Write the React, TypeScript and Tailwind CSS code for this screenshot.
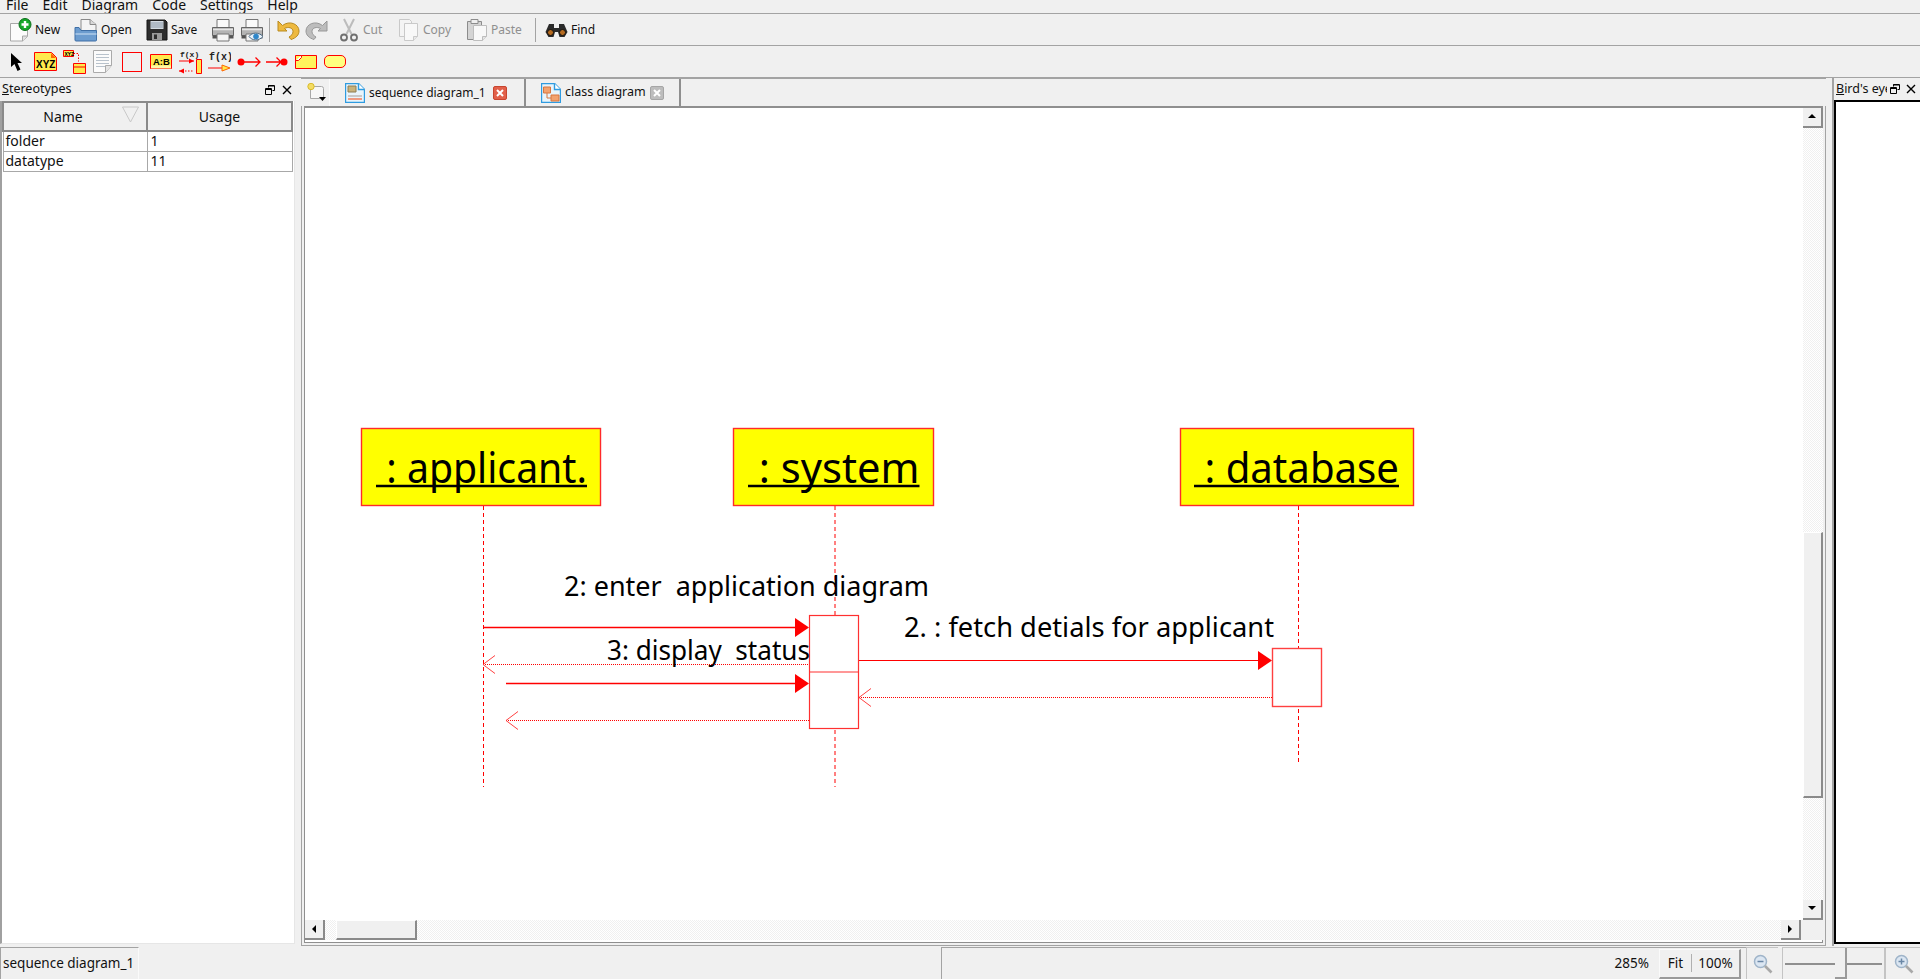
import React from 'react';

const UI_FONT = "font-['Noto_Sans',sans-serif]";

function IconNew() {
  return (
    <svg width="24" height="24" viewBox="0 0 24 24">
      <path d="M2.500 5.500h12l5 4v9l-5 4.500h-12z" fill="#fbfbfb" stroke="#a8a8a8" />
      <path d="M14.500 23v-5h5" fill="#e2e2e2" stroke="#a8a8a8" />
      <circle cx="17" cy="6.500" r="6" fill="#18a82c" stroke="#0b6e1a" />
      <path d="M17 3v7M13.500 6.500h7" stroke="#fff" strokeWidth="2.400" />
    </svg>
  );
}

function IconOpen() {
  return (
    <svg width="24" height="24" viewBox="0 0 24 24">
      <path d="M7 1.500h9l6 5v9H7z" fill="#f4f4f4" stroke="#8a8a8a" />
      <path d="M16 1.500v5h6" fill="#d9d9d9" stroke="#8a8a8a" />
      <path d="M1 9.500h4l2 3h15.500V22a1 1 0 0 1-1 1H2a1 1 0 0 1-1-1z" fill="#6c9ccf" stroke="#3f6fa6" />
      <path d="M1.500 15h21v2h-21z" fill="#9dbfe2" />
    </svg>
  );
}

function IconSave() {
  return (
    <svg width="22" height="22" viewBox="0 0 22 22">
      <path d="M1 1h18l2 2v18H1z" fill="#2d2d2d" stroke="#151515" />
      <path d="M4.500 2h13v8h-13z" fill="#d5dce3" />
      <path d="M5 4h12M5 6h12M5 8h12" stroke="#8b99a8" />
      <path d="M6 14h10v7H6z" fill="#9a9a9a" />
      <path d="M8 15.500h3v4.500H8z" fill="#2d2d2d" />
    </svg>
  );
}

function IconPrint({ eye }: { eye?: boolean }) {
  return (
    <svg width="24" height="24" viewBox="0 0 24 24">
      <path d="M6 1.500h12v8H6z" fill="#fafafa" stroke="#777" />
      <path d="M1.500 9.500h21v8h-21z" fill="#b4b4b4" stroke="#666" />
      <path d="M2 11.500h20" stroke="#e6e6e6" strokeWidth="1.500" />
      <path d="M1.500 17.500h21v3h-21z" fill="#555" />
      <path d="M6 16h12v7H6z" fill="#f5f5f5" stroke="#777" />
      {eye && (
        <g>
          <path d="M9 18.500c3-4.500 10-4.500 14 0-4 4.500-11 4.500-14 0z" fill="#e8f2fa" stroke="#4b6a85" />
          <circle cx="16" cy="18.500" r="2.800" fill="#2e86c9" />
        </g>
      )}
    </svg>
  );
}

function IconUndo({ on, flip }: { on?: boolean; flip?: boolean }) {
  const main = on ? '#eeb93f' : '#bdbdbd';
  const edge = on ? '#b98a1e' : '#979797';
  return (
    <svg width="24" height="22" viewBox="0 0 24 22" className={flip ? '-scale-x-100' : ''}>
      <path d="M2 2v10h9L8.500 9.500C12 7.500 17 8.500 17 12.500c0 2.500-1.500 4-4 5.500l2 2.500c5-1.500 8-4.500 8-8.500C23 5 13.500 1 6.500 6.500L2 2z" fill={main} stroke={edge} strokeLinejoin="round" />
    </svg>
  );
}

function IconCut() {
  return (
    <svg width="22" height="24" viewBox="0 0 22 24" fill="none">
      <path d="M6 1l7.500 15M16 1L8.500 16" stroke="#bcbcbc" strokeWidth="2" />
      <circle cx="6" cy="19.500" r="3" stroke="#6f6f6f" strokeWidth="1.800" />
      <circle cx="16" cy="19.500" r="3" stroke="#6f6f6f" strokeWidth="1.800" />
    </svg>
  );
}

function IconCopy() {
  return (
    <svg width="22" height="24" viewBox="0 0 22 24">
      <path d="M1.500 1.500h10l2 2v15h-12z" fill="#f4f4f4" stroke="#c9c9c9" />
      <path d="M6.500 5.500h13v13l-4 4h-9z" fill="#f8f8f8" stroke="#c9c9c9" />
      <path d="M15.500 22.500v-4h4" fill="#e8e8e8" stroke="#c9c9c9" />
    </svg>
  );
}

function IconPaste() {
  return (
    <svg width="22" height="24" viewBox="0 0 22 24">
      <path d="M1.500 3.500h14v18h-14z" fill="#d4d4d4" stroke="#8c8c8c" />
      <path d="M5 1.500h7v4H5z" fill="#efefef" stroke="#8c8c8c" />
      <path d="M7.500 7.500h13v11l-4 4h-9z" fill="#f8f8f8" stroke="#bdbdbd" />
      <path d="M16.500 22.500v-4h4" fill="#e4e4e4" stroke="#bdbdbd" />
    </svg>
  );
}

function IconFind() {
  return (
    <svg width="23" height="16" viewBox="0 0 23 16">
      <path d="M4 2h5v4h5V2h5l3.500 8-3 5h-5L13 10h-3l-1.500 5h-5l-3-5z" fill="#2a2a2a" />
      <circle cx="5.500" cy="10.500" r="3" fill="#b56a1f" stroke="#111" />
      <circle cx="17.500" cy="10.500" r="3" fill="#b56a1f" stroke="#111" />
    </svg>
  );
}

function ToolText({ label, off }: { label: string; off?: boolean }) {
  return <span className={`text-[12px] leading-none ml-[3px] ${off ? 'text-[#8f8f8f]' : 'text-[#111]'}`}>{label}</span>;
}

function Sequence() {
  return (
    <svg width="24" height="24" viewBox="0 0 24 24" fill="none">
      <path d="M.5.500h10v6h-10z" fill="#ffe94d" stroke="#f00" />
      <path d="M10.500 3.500h5v8" stroke="#f00" strokeDasharray="1.500 1.500" />
      <path d="M10.500 13.500h12v10h-12z" fill="#ffe94d" stroke="#f00" />
      <path d="M11 17h11" stroke="#f00" />
      <text x="1.500" y="6" fontSize="5" fontWeight="700" fill="#000">XYZ</text>
    </svg>
  );
}

function Toolbar2() {
  return (
    <div className="h-[32px] flex items-center pl-[10px] border-b border-[#a3a3a3]">
      <div className="w-[24px] flex">
        <svg width="13" height="20" viewBox="0 0 13 20"><path d="M1 1v14l3.500-3 3 7 3-1.500-3-6.500H12z" fill="#000" /></svg>
      </div>
      <div className="w-[29px] flex">
        <svg width="23" height="19" viewBox="0 0 23 19">
          <path d="M.5.500h17l5 5v13H.5z" fill="#ffe94d" stroke="#f00" />
          <path d="M17 1l5 5h-5z" fill="#f60" />
          <text x="2" y="15.500" fontSize="10" fontWeight="700" fontFamily="Liberation Sans" fill="#000">XYZ</text>
        </svg>
      </div>
      <div className="w-[30px] flex"><Sequence /></div>
      <div className="w-[29px] flex">
        <svg width="20" height="24" viewBox="0 0 20 24">
          <path d="M.5.500h18v15l-6 7H.500z" fill="#fbfbfb" stroke="#aaa" />
          <path d="M3 4.500h13M3 7.500h13M3 10.500h13M3 13.500h13M3 16.500h9" stroke="#b8c2cc" />
          <path d="M12.500 22.500v-7h6" fill="#e4e4e4" stroke="#aaa" />
        </svg>
      </div>
      <div className="w-[28px] flex"><div className="w-[20px] h-[20px] border border-[#f00]" /></div>
      <div className="w-[29px] flex">
        <svg width="22" height="15" viewBox="0 0 22 15">
          <path d="M.5.500h21v14H.5z" fill="#ffe94d" stroke="#f00" />
          <path d="M1 11.500h20v3H1z" fill="#fff7a8" />
          <text x="3" y="11" fontSize="9.500" fontWeight="700" fontFamily="Liberation Sans" fill="#000">A:B</text>
        </svg>
      </div>
      <div className="w-[29px] flex">
        <svg width="23" height="24" viewBox="0 0 23 24">
          <text x="1" y="7" fontSize="8" fontWeight="700" fontFamily="Liberation Mono" fill="#222">f(x)</text>
          <path d="M0 11h15" stroke="#f00" />
          <path d="M10 8.500l5 2.500-5 2.500z" fill="#f00" />
          <path d="M0 21h15" stroke="#f00" strokeDasharray="1.500 1.500" />
          <path d="M5 18.500l-5 2.500 5 2.500z" fill="#f00" />
          <path d="M17.500 9.500h5v14h-5z" fill="#ffe94d" stroke="#f00" />
        </svg>
      </div>
      <div className="w-[29px] flex">
        <svg width="23" height="24" viewBox="0 0 23 24">
          <text x="1" y="10" fontSize="10" fontWeight="700" fontFamily="Liberation Mono" fill="#222">f(x)</text>
          <path d="M0 18h15" stroke="#f00" />
          <path d="M14 15l8 3-8 3z" fill="#ffe94d" stroke="#f60" />
        </svg>
      </div>
      <div className="w-[29px] flex">
        <svg width="24" height="12" viewBox="0 0 24 12">
          <circle cx="4" cy="6" r="3.500" fill="#f00" />
          <path d="M5 6h18M18.500 1.500L23 6l-4.500 4.500" fill="none" stroke="#f00" strokeWidth="1.300" />
        </svg>
      </div>
      <div className="w-[29px] flex">
        <svg width="22" height="12" viewBox="0 0 22 12">
          <circle cx="18" cy="6" r="3.500" fill="#f00" />
          <path d="M0 6h17M10.500 1.500L15 6l-4.500 4.500" fill="none" stroke="#f00" strokeWidth="1.300" />
        </svg>
      </div>
      <div className="w-[29px] flex">
        <svg width="22" height="14" viewBox="0 0 22 14">
          <path d="M.5.500h21v13H.5z" fill="#fff35c" stroke="#f00" />
          <path d="M6.500.500v2l-3 3h-3" fill="#fff" stroke="#f00" />
        </svg>
      </div>
      <div className="w-[22px] h-[13px] rounded-[5px] border border-[#f00] bg-[#ffff80]" />
    </div>
  );
}

function Toolbar1() {
  return (
    <div className="h-[32px] flex items-center pl-[8px] pt-[1px] border-b border-[#a3a3a3]">
      <div className="w-[66px] flex items-center"><IconNew /><ToolText label="New" /></div>
      <div className="w-[72px] flex items-center"><IconOpen /><ToolText label="Open" /></div>
      <div className="w-[65px] flex items-center"><IconSave /><ToolText label="Save" /></div>
      <div className="w-[29px] flex"><IconPrint /></div>
      <div className="w-[29px] flex"><IconPrint eye /></div>
      <div className="w-[7px] h-[24px] border-l border-[#a3a3a3]" />
      <div className="w-[29px] flex"><IconUndo on /></div>
      <div className="w-[33px] flex"><IconUndo flip /></div>
      <div className="w-[60px] flex items-center"><IconCut /><ToolText label="Cut" off /></div>
      <div className="w-[68px] flex items-center"><IconCopy /><ToolText label="Copy" off /></div>
      <div className="w-[69px] flex items-center"><IconPaste /><ToolText label="Paste" off /></div>
      <div className="w-[10px] h-[24px] border-l border-[#a3a3a3]" />
      <div className="flex items-center"><IconFind /><ToolText label="Find" /></div>
    </div>
  );
}

function DockButtons() {
  return (
    <>
      <svg width="10" height="10" viewBox="0 0 10 10" fill="none" stroke="#000">
        <path d="M3.500 2.500V.5h6v5H7.500" />
        <path d="M3 1h6" />
        <path d="M.5 3.500h6v6h-6z" />
        <path d="M0 4.500h7" />
      </svg>
      <svg width="10" height="10" viewBox="0 0 10 10" fill="none" stroke="#000" strokeWidth="1.400">
        <path d="M1 1l8 8M9 1L1 9" />
      </svg>
    </>
  );
}

function LeftPanel() {
  return (
    <div className="w-[295px] shrink-0 flex flex-col">
      <div className="h-[23px] flex items-center pl-[2px]">
        <span className="text-[12.500px] text-[#111]"><span className="underline">S</span>tereotypes</span>
        <div className="ml-auto flex items-center gap-[7px] mr-[3px]"><DockButtons /></div>
      </div>
      <div className="flex-1 bg-white border-l-2 border-[#a0a0a0] border-r border-r-[#e6e6e6] border-b border-b-[#e6e6e6] mb-[2px]">
        <table className="w-[291px] table-fixed border-collapse text-[14px] leading-[16px] text-[#111]">
          <thead>
            <tr className="h-[29px] bg-[#f0f0f0]">
              <th className="w-[144px] font-normal relative border-2 border-[#8a8a8a] pr-[24px]">
                Name
                <svg className="absolute right-[7px] top-[3px]" width="17" height="17" viewBox="0 0 17 17" fill="none">
                  <path d="M.5 1h16L8.500 16z" stroke="#c8c8c8" />
                </svg>
              </th>
              <th className="font-normal border-2 border-[#8a8a8a]">Usage</th>
            </tr>
          </thead>
          <tbody>
            <tr className="h-[20px]">
              <td className="px-[2px] py-0 border border-[#a8a8a8]">folder</td>
              <td className="px-[3px] py-0 border border-[#a8a8a8]">1</td>
            </tr>
            <tr className="h-[20px]">
              <td className="px-[2px] py-0 border border-[#a8a8a8]">datatype</td>
              <td className="px-[3px] py-0 border border-[#a8a8a8]">11</td>
            </tr>
          </tbody>
        </table>
      </div>
    </div>
  );
}

function CloseBadge({ on }: { on?: boolean }) {
  return (
    <div className={`w-[14px] h-[14px] rounded-[2px] flex items-center justify-center border ${on ? 'bg-[#e2604a] border-[#c8452f]' : 'bg-[#bdbdbd] border-[#a6a6a6]'}`}>
      <svg width="8" height="8" viewBox="0 0 8 8"><path d="M1 1l6 6M7 1L1 7" stroke="#fff" strokeWidth="2" /></svg>
    </div>
  );
}

function TabIcon({ kind }: { kind: 'seq' | 'class' }) {
  return (
    <svg width="20" height="20" viewBox="0 0 20 20">
      <path d="M.5.500h13l6 6v13H.5z" fill="#e9f4fb" stroke="#2f9be0" strokeWidth="1.400" />
      <path d="M13.500.500v6h6" fill="#fff" stroke="#2f9be0" strokeWidth="1.400" />
      {kind === 'seq' ? (
        <g>
          <path d="M3 3h8v6H3z" fill="#c9b27a" stroke="#8d7c52" />
          <path d="M3 12h14v2H3z" fill="#c8c8c8" />
          <path d="M3 16h14" stroke="#ef7d5a" strokeWidth="1.500" />
        </g>
      ) : (
        <g>
          <path d="M2.500 4h7v6h-7z" fill="#f3a26f" stroke="#d8763f" />
          <path d="M10 12h8v6h-8z" fill="#f3a26f" stroke="#d8763f" />
          <path d="M6 10v5h4" fill="none" stroke="#d8763f" />
        </g>
      )}
    </svg>
  );
}

function TabBar() {
  return (
    <div className="h-[28px] flex items-end border-t border-[#a3a3a3] text-[12px] text-[#111]">
      <div className="w-[28px] h-full flex items-center pl-[6px]">
        <svg width="20" height="19" viewBox="0 0 20 19">
          <path d="M3.500 3.500h11a2 2 0 0 1 2 2v10h-13z" fill="#f7f7f7" stroke="#a8a8a8" />
          <circle cx="4" cy="3.500" r="3.200" fill="#f4dc63" stroke="#d8bb2d" />
          <path d="M12 14h7l-3.500 4z" fill="#000" />
        </svg>
      </div>
      <div className="w-[197px] h-full flex items-center pl-[15px] border-r-2 border-[#8f8f8f] border-l border-l-[#fafafa]">
        <TabIcon kind="seq" />
        <span className="ml-[4px] w-[124px] whitespace-nowrap">sequence diagram_1</span>
        <CloseBadge on />
      </div>
      <div className="w-[155px] h-full flex items-center pl-[15px] border-r-2 border-[#8f8f8f]">
        <TabIcon kind="class" />
        <span className="ml-[4px] w-[85px] whitespace-nowrap text-[12.500px]">class diagram</span>
        <CloseBadge />
      </div>
    </div>
  );
}

function ArrowButton({ dir }: { dir: 'up' | 'down' | 'left' | 'right' }) {
  const paths = {
    up: 'M1 6h8L5 2z',
    down: 'M1 2h8L5 6z',
    left: 'M7 1v8L3 5z',
    right: 'M3 1v8l4-4z',
  };
  return (
    <div className="w-[20px] h-[20px] shrink-0 bg-[#f0f0f0] border-r-2 border-b-2 border-[#8a8a8a] flex items-center justify-center">
      <svg width="10" height="10" viewBox="0 0 10 10"><path d={paths[dir]} fill="#000" /></svg>
    </div>
  );
}

function Diagram() {
  const boxes = [
    { x: 56, w: 240, label: '\u00a0: applicant.', tx: 71, tw: 211 },
    { x: 428, w: 201, label: '\u00a0: system', tx: 443, tw: 171.5 },
    { x: 875, w: 234, label: '\u00a0: database', tx: 889, tw: 205 },
  ];
  const red = '#ff0000';
  return (
    <svg width="1498" height="812" viewBox="0 0 1498 812" className="block font-['Noto_Sans',sans-serif]">
      {/* lifelines */}
      <g stroke={red} strokeDasharray="4 3" fill="none">
        <path d="M178.500 398V679" />
        <path d="M530 398V679" />
        <path d="M993.500 398V655" />
      </g>

      {boxes.map(b => (
        <g key={b.label}>
          <rect x={b.x + 0.5} y={320.5} width={b.w - 1} height={77} fill="#ffff00" stroke="#ff2a2a" strokeWidth="1.400" />
          <text x={b.tx} y={375} fontSize="41" textLength={b.tw} lengthAdjust="spacingAndGlyphs" fill="#000">{b.label}</text>
          <line x1={b.tx} x2={b.tx + b.tw} y1={378} y2={378} stroke="#000" strokeWidth="2.400" />
        </g>
      ))}

      {/* activation bars */}
      <rect x="504.500" y="507.500" width="49" height="113" fill="#fff" stroke="#ff3030" strokeWidth="1.200" />
      <line x1="504" x2="554" y1="564" y2="564" stroke="#ff3030" strokeWidth="1.200" />
      <rect x="967.500" y="540.500" width="49" height="58" fill="#fff" stroke="#ff4040" strokeWidth="1.400" />

      {/* calls */}
      <g stroke={red} fill="none">
        <path d="M178 519.500H492" strokeWidth="1.400" />
        <path d="M201 575.500H492" strokeWidth="1.400" />
        <path d="M554 552.500H955" />
      </g>
      <g fill={red}>
        <path d="M490 510l14 9.500-14 9.500z" />
        <path d="M490 566l14 9.500-14 9.500z" />
        <path d="M953 543l14 9.500-14 9.500z" />
      </g>

      {/* returns */}
      <g stroke={red} fill="none" strokeDasharray="1 1">
        <path d="M178 556.500H504" />
        <path d="M201 612.500H504" />
        <path d="M554 589.500H967" />
      </g>
      <g stroke="#ff4040" fill="none">
        <path d="M190 547.500l-12 9 12 9" />
        <path d="M213 603.500l-12 9 12 9" />
        <path d="M566 580.500l-12 9 12 9" />
      </g>

      <g fontSize="28" fill="#000">
        <text x="259" y="488" textLength="365" lengthAdjust="spacingAndGlyphs" xmlSpace="preserve">2: enter  application diagram</text>
        <text x="302" y="552" textLength="203" lengthAdjust="spacingAndGlyphs" xmlSpace="preserve">3: display  status</text>
        <text x="599" y="529" textLength="370" lengthAdjust="spacingAndGlyphs">2. : fetch detials for applicant</text>
      </g>
    </svg>
  );
}

const TRACK = 'bg-[repeating-conic-gradient(#f0f0f0_0%_25%,#ffffff_0%_50%)] bg-size-[2px_2px]';

function MainPane() {
  return (
    <div className="w-[1525px] shrink-0 flex flex-col">
      <TabBar />
      <div className="flex-1 border-x border-b border-[#a3a3a3] px-[2px] pb-[2px]">
        <div className="h-full border-x border-b border-t-2 border-[#8f8f8f] grid grid-cols-[1498px_20px] grid-rows-[812px_20px] bg-white">
          <Diagram />
          {/* vertical scrollbar */}
          <div className={`flex flex-col ${TRACK}`}>
            <ArrowButton dir="up" />
            <div className="h-[404px]" />
            <div className="h-[266px] bg-[#f0f0f0] border-r-2 border-b-2 border-[#8a8a8a] border-l border-t border-l-white border-t-white" />
            <div className="flex-1" />
            <ArrowButton dir="down" />
          </div>
          {/* horizontal scrollbar */}
          <div className={`flex ${TRACK}`}>
            <ArrowButton dir="left" />
            <div className="w-[11px]" />
            <div className="w-[81px] bg-[#f0f0f0] border-r-2 border-b-2 border-[#8a8a8a] border-l border-t border-l-white border-t-white" />
            <div className="flex-1" />
            <ArrowButton dir="right" />
            <div className="w-[2px] bg-[#f0f0f0]" />
          </div>
          <div className="bg-[#f0f0f0]" />
        </div>
      </div>
    </div>
  );
}

function RightPanel() {
  return (
    <div className="flex-1 flex flex-col min-w-0">
      <div className="h-[22px] flex items-center pl-[2px]">
        <span className="w-[51px] overflow-hidden whitespace-nowrap text-[12.500px] text-[#111]"><span className="underline">B</span>ird's eye</span>
        <div className="ml-[3px] flex items-center gap-[6px]"><DockButtons /></div>
      </div>
      <div className="flex-1 bg-white border-2 border-r-0 border-black mb-[2px]" />
    </div>
  );
}

function StatusBar() {
  return (
    <div className="flex-1 flex text-[13.500px] text-[#111] mt-[1px]">
      <div className="w-[139px] flex items-center pl-[2px] border-t border-l border-[#a3a3a3] border-r border-r-[#fafafa] whitespace-nowrap">sequence diagram_1</div>
      <div className="w-[802px]" />
      <div className="w-[805px] flex items-center justify-end border-t border-l border-[#a3a3a3]">
        <span className="mr-[10px]">285%</span>
        <div className="w-[82px] h-[30px] mr-[5px] flex items-center border-r-2 border-b-2 border-[#9a9a9a] border-t border-l border-t-[#fafafa] border-l-[#fafafa]">
          <span className="w-[31px] text-center">Fit</span>
          <div className="h-[18px] border-l border-[#b0b0b0]" />
          <span className="flex-1 text-center">100%</span>
        </div>
      </div>
      <div className="w-[32px] flex items-center justify-center border-t border-l border-[#c4c4c4]">
        <svg width="20" height="20" viewBox="0 0 20 20" fill="none">
          <circle cx="7.500" cy="7.500" r="6" fill="#dbe6f2" stroke="#9fb4c9" strokeWidth="1.500" />
          <path d="M4.500 7.500h6" stroke="#6a87a6" strokeWidth="1.500" />
          <path d="M12 12l6.500 6.500" stroke="#a8a8a8" strokeWidth="2.600" />
        </svg>
      </div>
      <div className="w-[4px]" />
      <div className="w-[103px] relative flex items-center border-t border-x border-[#c4c4c4]">
        <div className="w-full mx-[2px] border-t-2 border-[#8f8f8f]" />
        {/* slider thumb */}
        <div className="absolute left-[52px] top-0 bottom-0 w-[12px] bg-[#f0f0f0] border-r-2 border-b-2 border-[#9a9a9a]" />
      </div>
      <div className="flex-1 flex items-center pl-[8px] border-t border-l border-[#c4c4c4]">
        <svg width="20" height="20" viewBox="0 0 20 20" fill="none">
          <circle cx="7.500" cy="7.500" r="6" fill="#dbe6f2" stroke="#9fb4c9" strokeWidth="1.500" />
          <path d="M4.500 7.500h6M7.500 4.500v6" stroke="#6a87a6" strokeWidth="1.500" />
          <path d="M12 12l6.500 6.500" stroke="#a8a8a8" strokeWidth="2.600" />
        </svg>
      </div>
    </div>
  );
}

export default function App() {
  return (
    <div className={`w-screen h-screen overflow-hidden flex flex-col bg-[#f0f0f0] ${UI_FONT}`}>
      {/* menu bar is cut off by the top of the window */}
      <div className="h-[14px] flex items-end gap-[14px] pl-[6px] border-b border-[#a3a3a3] text-[14px] leading-[17px] text-[#111] overflow-hidden shrink-0">
        <span>File</span>
        <span>Edit</span>
        <span>Diagram</span>
        <span>Code</span>
        <span>Settings</span>
        <span>Help</span>
      </div>
      <Toolbar1 />
      <Toolbar2 />
      <div className="h-[868px] flex shrink-0">
        <LeftPanel />
        <div className="w-[6px] shrink-0" />
        <MainPane />
        <div className="w-[8px] shrink-0 flex justify-end"><div className="w-[2px] bg-[#a3a3a3]" /></div>
        <RightPanel />
      </div>
      <StatusBar />
    </div>
  );
}
